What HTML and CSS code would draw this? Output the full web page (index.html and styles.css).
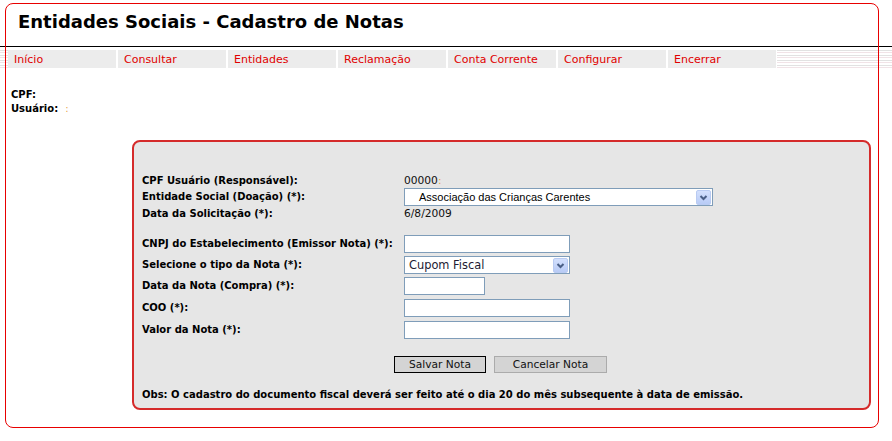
FILE: index.html
```html
<!DOCTYPE html>
<html lang="pt-BR">
<head>
<meta charset="utf-8">
<title>Entidades Sociais - Cadastro de Notas</title>
<link rel="stylesheet" href="styles.css">
</head>
<body>
<div class="page">
  <h1 class="title">Entidades Sociais - Cadastro de Notas</h1>
  <div class="rule"></div>
  <nav class="nav">
    <div class="nav-items">
      <a class="nav-item" href="#">Início</a>
      <a class="nav-item" href="#">Consultar</a>
      <a class="nav-item" href="#">Entidades</a>
      <a class="nav-item" href="#">Reclamação</a>
      <a class="nav-item" href="#">Conta Corrente</a>
      <a class="nav-item" href="#">Configurar</a>
      <a class="nav-item" href="#">Encerrar</a>
    </div>
  </nav>
  <div class="info">
    <div>CPF:</div>
    <div>Usuário:<span class="colon colon-user">:</span></div>
  </div>
  <form class="panel">
    <div class="row row-text">
      <span class="label">CPF Usuário (Responsável):</span>
      <span class="value">00000<span class="colon">:</span></span>
    </div>
    <div class="row row-select">
      <span class="label">Entidade Social (Doação) (*):</span>
      <div class="select select-wide">
        <span class="select-text">Associação das Crianças Carentes</span>
        <span class="select-arrow"><svg width="13" height="13" viewBox="0 0 13 13"><polyline points="3.5,5 6.5,8 9.5,5" fill="none" stroke="#4a5f86" stroke-width="2"/></svg></span>
      </div>
    </div>
    <div class="row row-text">
      <span class="label">Data da Solicitação (*):</span>
      <span class="value">6/8/2009</span>
    </div>
    <div class="fields">
      <div class="row row-field h21">
        <span class="label label-field">CNPJ do Estabelecimento (Emissor Nota) (*):</span>
        <input class="input input-md" type="text">
      </div>
      <div class="row row-field h21">
        <span class="label label-field">Selecione o tipo da Nota (*):</span>
        <div class="select select-md">
          <span class="select-text select-text-tipo">Cupom Fiscal</span>
          <span class="select-arrow"><svg width="13" height="13" viewBox="0 0 13 13"><polyline points="3.5,5 6.5,8 9.5,5" fill="none" stroke="#4a5f86" stroke-width="2"/></svg></span>
        </div>
      </div>
      <div class="row row-field h22">
        <span class="label label-field">Data da Nota (Compra) (*):</span>
        <input class="input input-sm" type="text">
      </div>
      <div class="row row-field h22">
        <span class="label label-field">COO (*):</span>
        <input class="input input-md" type="text">
      </div>
      <div class="row row-field h22">
        <span class="label label-field">Valor da Nota (*):</span>
        <input class="input input-md" type="text">
      </div>
    </div>
    <div class="actions">
      <button class="btn btn-primary" type="button">Salvar Nota</button>
      <button class="btn btn-secondary" type="button">Cancelar Nota</button>
    </div>
    <p class="obs">Obs: O cadastro do documento fiscal deverá ser feito até o dia 20 do mês subsequente à data de emissão.</p>
  </form>
</div>
</body>
</html>
```
FILE: styles.css
```css
body {
  margin: 0;
  font-family: "DejaVu Sans", Verdana, sans-serif;
  color: #000;
  background: #fff;
}

.page {
  position: relative;
  margin: 3px 13px 0 5px;
  height: 425px;
}

.page::after {
  content: "";
  position: absolute;
  inset: 0;
  border: 1px solid #e80000;
  border-radius: 8px;
  pointer-events: none;
}

.title {
  margin: 0;
  height: 43px;
  box-sizing: border-box;
  padding: 8px 0 0 13px;
  font-size: 18px;
  line-height: 22px;
  font-weight: bold;
}

.rule {
  height: 1px;
  background: #000;
  margin: 0 -13px 0 -5px;
}

.nav {
  display: flex;
  height: 18px;
  margin: 3px -13px 0 -5px;
  padding-left: 8px;
  background: repeating-linear-gradient(to bottom,
    #e2e2e2 0, #e2e2e2 1px,
    #fff 1px, #fff 2px,
    #f1e3e7 2px, #f1e3e7 3px,
    #fff 3px, #fff 5px);
}

.nav-items {
  display: flex;
  gap: 2px;
  background: #fff;
  padding-right: 1px;
}

.nav-item {
  width: 108px;
  box-sizing: border-box;
  padding: 1px 0 0 6px;
  background: #ececec;
  color: #e00000;
  font-size: 11px;
  line-height: 17px;
  text-decoration: none;
}

.info {
  margin-top: 20px;
  padding-left: 6px;
  font-size: 10px;
  font-weight: bold;
  line-height: 14px;
}

.colon {
  color: #e8a84a;
  font-weight: normal;
}

.colon-user {
  margin-left: 7px;
}

.panel {
  margin: 24px 8px 0 127px;
  border: 2px solid #d52b2b;
  border-radius: 8px;
  background: #e6e6e6;
  padding: 31px 8px 5px;
}

.row {
  display: flex;
  align-items: flex-start;
}

.row-text {
  height: 16px;
}

.row-select {
  height: 17px;
}

.label {
  flex: none;
  width: 262px;
  font-size: 10px;
  font-weight: bold;
  line-height: 16px;
}

.value {
  font-size: 10.67px;
  line-height: 16px;
  color: #111;
}

.fields {
  margin-top: 13px;
}

.h21 {
  height: 21px;
}

.h22 {
  height: 22px;
}

.label-field {
  line-height: 18px;
}

.select {
  display: flex;
  align-items: center;
  box-sizing: border-box;
  height: 18px;
  border: 1px solid #7f9db9;
  background: #fff;
}

.row-select .select {
  margin-top: -1px;
}

.select-wide {
  width: 309px;
}

.select-md {
  width: 166px;
}

.select-text {
  flex: 1;
  padding-left: 14px;
  font-family: "Liberation Sans", Arial, sans-serif;
  font-size: 11px;
  line-height: 16px;
}

.select-text-tipo {
  padding-left: 4px;
  font-family: "DejaVu Sans", Verdana, sans-serif;
  font-size: 11.4px;
  color: #221a33;
}

.select-arrow {
  display: flex;
  align-items: center;
  justify-content: center;
  width: 15px;
  height: 15px;
  margin-right: 1px;
  box-sizing: border-box;
  border: 1px solid #b9cbf2;
  border-radius: 2px;
  background: linear-gradient(to bottom, #d3e0fd, #b8cbf6);
}

.input {
  box-sizing: border-box;
  height: 18px;
  margin: 0;
  padding: 0 2px;
  border: 1px solid #7f9db9;
  background: #fff;
}

.input-md {
  width: 166px;
}

.input-sm {
  width: 81px;
}

.actions {
  display: flex;
  gap: 8px;
  margin: 13px 0 0 252px;
}

.btn {
  height: 17px;
  box-sizing: border-box;
  margin: 0;
  padding: 0;
  border: 1px solid #ababab;
  background: #d4d4d4;
  color: #111;
  font-family: "DejaVu Sans", Verdana, sans-serif;
  font-size: 10.67px;
  line-height: 15px;
}

.btn-primary {
  width: 92px;
  border-color: #000;
}

.btn-secondary {
  width: 113px;
}

.obs {
  margin: 14px 0 0;
  font-size: 10px;
  font-weight: bold;
  line-height: 16px;
}
```
